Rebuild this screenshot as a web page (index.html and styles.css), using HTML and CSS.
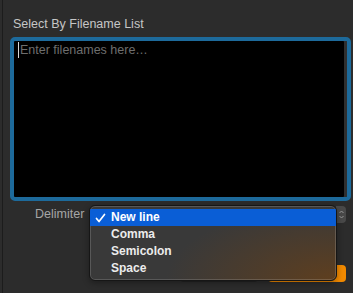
FILE: index.html
```html
<!DOCTYPE html>
<html lang="en">
<head>
<meta charset="UTF-8" />
<title>Select By Filename List</title>
<link rel="stylesheet" href="styles.css">
</head>
<body>
  <div class="window">
    <div class="title">Select By Filename List</div>

    <div class="editor">
      <div class="editor-text">
        <span class="caret"></span><span class="placeholder">Enter filenames here…</span>
      </div>
    </div>

    <div class="delimiter-row">
      <span class="label">Delimiter</span>
      <div class="popup">
        <span class="stepper">
          <svg width="9" height="13" viewBox="0 0 9 13">
            <polyline points="2.5,5 4.5,3 6.5,5" fill="none" stroke="#9a9a9a" stroke-width="1" />
            <polyline points="2.5,8 4.5,10 6.5,8" fill="none" stroke="#9a9a9a" stroke-width="1" />
          </svg>
        </span>

        <ul class="menu" role="menu">
          <li class="menu-item selected" role="menuitem">
            <svg class="check" width="11" height="10" viewBox="0 0 11 10">
              <polyline points="1.5,5.5 4,8.5 9.5,1.5" fill="none" stroke="#fff" stroke-width="1.7" stroke-linecap="round" stroke-linejoin="round" />
            </svg>
            New line
          </li>
          <li class="menu-item" role="menuitem">Comma</li>
          <li class="menu-item" role="menuitem">Semicolon</li>
          <li class="menu-item" role="menuitem">Space</li>
        </ul>
      </div>
    </div>

    <div class="buttons">
      <button class="btn btn-cancel"></button>
      <button class="btn btn-ok"></button>
    </div>
  </div>
</body>
</html>
```

FILE: styles.css
```css
* {
  box-sizing: border-box;
}
body {
  margin: 0;
  background: #2c2c2c;
  font-family: "Liberation Sans", Arial, sans-serif;
  height: 293px;
  overflow: hidden;
}

.window {
  margin-left: 2px;
  border-left: 1px solid #1c1c1c;
  height: 293px;
  padding: 17px 0 0 7px;
}

.title {
  font-size: 12.5px;
  line-height: 15px;
  color: #c6c6c6;
  margin: 0 0 5px 3px;
}

/* Text area with focus ring */
.editor {
  width: 341px;
  height: 164px;
  background: #000;
  border: 4px solid #1d6a9b;
  border-radius: 5px;
  box-shadow: inset -3px 0 0 #2f2f2f;
}

.editor-text {
  display: flex;
  align-items: center;
  height: 17px;
  padding-left: 4px;
}

.caret {
  width: 1px;
  height: 16px;
  background: #d8d8d8;
}

.placeholder {
  margin-left: 1px;
  font-size: 12.5px;
  color: #6e6e6e;
}

/* Delimiter popup */
.delimiter-row {
  display: flex;
  align-items: center;
  height: 18px;
  margin-top: 4px;
  padding-left: 25px;
}

.label {
  font-size: 12.5px;
  color: #a6a6a6;
  width: 54px;
}

.popup {
  position: relative;
  display: flex;
  justify-content: flex-end;
  width: 257px;
  height: 17px;
}

.stepper {
  display: flex;
  align-items: center;
  justify-content: center;
  width: 10px;
  height: 17px;
  background: #494949;
  border-radius: 0 4px 4px 0;
}

.menu {
  position: absolute;
  top: -1px;
  left: 0;
  width: 248px;
  height: 76px;
  margin: 0;
  padding: 3px 0;
  list-style: none;
  border-radius: 6px;
  border: 1px solid #161616;
  box-shadow: inset 0 0 0 1px rgba(255, 255, 255, 0.16), 0 2px 6px rgba(0, 0, 0, 0.35);
  background:
    radial-gradient(ellipse 170px 75px at 100% 100%, rgba(104, 64, 24, 0.8), rgba(104, 64, 24, 0)),
    #393939;
  overflow: hidden;
}

.menu-item {
  position: relative;
  height: 17px;
  line-height: 17px;
  padding-left: 21px;
  font-size: 12px;
  font-weight: bold;
  color: #ececec;
}

.menu-item.selected {
  background: #0a5ed6;
  color: #fff;
}

.check {
  position: absolute;
  left: 5px;
  top: 4px;
}

/* Bottom buttons, mostly hidden by the menu */
.buttons {
  display: flex;
  justify-content: flex-end;
  gap: 10px;
  width: 336px;
  margin-top: 42px;
}

.btn {
  width: 78px;
  height: 17px;
  border: 0;
  border-radius: 4px;
  padding: 0;
}

.btn-cancel {
  background: #232323;
}

.btn-ok {
  background: #f28a00;
}
```
